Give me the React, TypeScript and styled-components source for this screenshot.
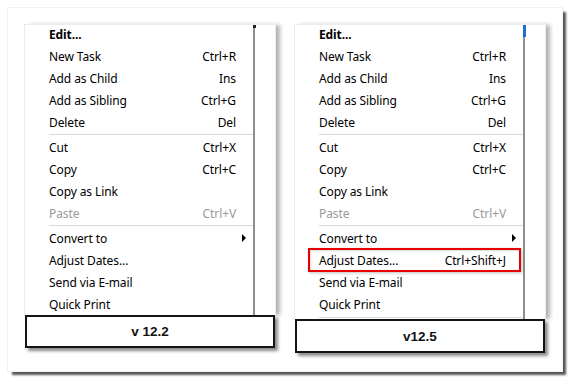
import React from "react";
import styled, { createGlobalStyle } from "styled-components";

const Global = createGlobalStyle`
  html, body { margin: 0; padding: 0; background: #ffffff; }
  body { width: 571px; height: 379px; overflow: hidden; }
`;

const Card = styled.div`
  margin: 8px 0 0 8px;
  width: 554px;
  height: 363px;
  box-sizing: border-box;
  background: #ffffff;
  box-shadow: 0 0 0 1px #f2f2f2, 4px 4px 2px rgba(45, 45, 45, 0.8);
  padding: 17px;
  display: flex;
  gap: 20px;
  align-items: flex-start;
`;

const Panel = styled.div`
  width: 250px;
  display: flex;
  flex-direction: column;
`;

const Menu = styled.div<{ $height: number }>`
  display: flex;
  height: ${(p) => p.$height}px;
  background: #ffffff;
  box-shadow: 0 0 0 1px #ececec, 5px 0 4px rgba(0, 0, 0, 0.3);
  overflow: hidden;
  position: relative;
  z-index: 1;
`;

const MenuArea = styled.div`
  width: 228px;
  flex: none;
  border-right: 2px solid #8e8e8e;
  position: relative;
`;

const Filler = styled.div`
  flex: 1;
  background: #ffffff;
`;

const Items = styled.div`
  margin-top: -2px;
  display: flex;
  flex-direction: column;
`;

const Row = styled.div<{ $bold?: boolean; $disabled?: boolean }>`
  position: relative;
  height: 22px;
  display: flex;
  align-items: center;
  padding: 0 17px 0 24px;
  font-family: "Segoe UI", "Noto Sans", sans-serif;
  font-size: 12px;
  letter-spacing: -0.1px;
  font-weight: ${(p) => (p.$bold ? 700 : 400)};
  color: ${(p) => (p.$disabled ? "#9a9a9a" : "#000000")};
  white-space: nowrap;
`;

const Shortcut = styled.span`
  margin-left: auto;
`;

const Arrow = styled.span`
  margin-left: auto;
  margin-right: -10px;
  width: 0;
  height: 0;
  border-top: 4px solid transparent;
  border-bottom: 4px solid transparent;
  border-left: 4px solid #000;
`;

const Separator = styled.div<{ $top?: number }>`
  margin: ${(p) => p.$top ?? 1}px 0 1px 24px;
  height: 1px;
  background: #d9d9d9;
`;

const Highlight = styled.div`
  position: absolute;
  left: 13px;
  right: 2px;
  top: -1px;
  bottom: -1px;
  border: 2px solid #e60000;
  box-shadow: 1px 1px 3px rgba(0, 0, 0, 0.25), inset 1px 1px 2px rgba(0, 0, 0, 0.15);
  pointer-events: none;
`;

const Thumb = styled.div<{ $color: string; $h: number }>`
  position: absolute;
  right: -3px;
  top: 0;
  width: 3px;
  height: ${(p) => p.$h}px;
  background: ${(p) => p.$color};
`;

const Label = styled.div<{ $height: number }>`
  height: ${(p) => p.$height}px;
  box-sizing: border-box;
  border: 2px solid #141414;
  background: #ffffff;
  box-shadow: 3px 3px 3px rgba(0, 0, 0, 0.45);
  display: flex;
  align-items: center;
  justify-content: center;
  font-family: "Liberation Sans", Arial, sans-serif;
  font-weight: 700;
  font-size: 13.5px;
  color: #111;
  position: relative;
  z-index: 2;
`;

type Item =
  | { kind: "sep"; top?: number }
  | {
      kind: "item";
      label: string;
      shortcut?: string;
      bold?: boolean;
      disabled?: boolean;
      submenu?: boolean;
      highlight?: boolean;
    };

function buildItems(v125: boolean): Item[] {
  const items: Item[] = [
    { kind: "item", label: "Edit...", bold: true },
    { kind: "item", label: "New Task", shortcut: "Ctrl+R" },
    { kind: "item", label: "Add as Child", shortcut: "Ins" },
    { kind: "item", label: "Add as Sibling", shortcut: "Ctrl+G" },
    { kind: "item", label: "Delete", shortcut: "Del" },
    { kind: "sep" },
    { kind: "item", label: "Cut", shortcut: "Ctrl+X" },
    { kind: "item", label: "Copy", shortcut: "Ctrl+C" },
    { kind: "item", label: "Copy as Link" },
    { kind: "item", label: "Paste", shortcut: "Ctrl+V", disabled: true },
    { kind: "sep" },
    { kind: "item", label: "Convert to", submenu: true },
    {
      kind: "item",
      label: "Adjust Dates...",
      shortcut: v125 ? "Ctrl+Shift+J" : undefined,
      highlight: v125,
    },
    { kind: "item", label: "Send via E-mail" },
    { kind: "item", label: "Quick Print" },
  ];
  if (v125) items.push({ kind: "sep", top: 2 });
  return items;
}

function ContextPanel({ v125, label }: { v125: boolean; label: string }) {
  const items = buildItems(v125);
  return (
    <Panel>
      <Menu $height={v125 ? 294 : 290}>
        <MenuArea>
          <Thumb $color={v125 ? "#1f6fd1" : "#222"} $h={v125 ? 12 : 3} />
          <Items>
            {items.map((it, i) =>
              it.kind === "sep" ? (
                <Separator key={i} $top={it.top} />
              ) : (
                <Row key={i} $bold={it.bold} $disabled={it.disabled}>
                  <span>{it.label}</span>
                  {it.shortcut && <Shortcut>{it.shortcut}</Shortcut>}
                  {it.submenu && <Arrow />}
                  {it.highlight && <Highlight />}
                </Row>
              )
            )}
          </Items>
        </MenuArea>
        <Filler />
      </Menu>
      <Label $height={v125 ? 34 : 33}>{label}</Label>
    </Panel>
  );
}

export default function App() {
  return (
    <>
      <Global />
      <Card>
        <ContextPanel v125={false} label="v 12.2" />
        <ContextPanel v125={true} label="v12.5" />
      </Card>
    </>
  );
}
